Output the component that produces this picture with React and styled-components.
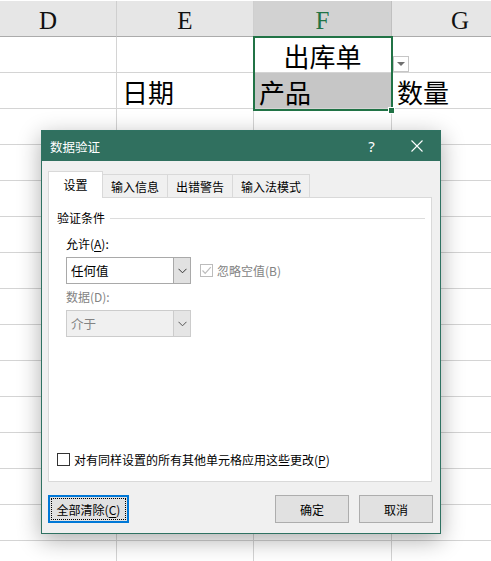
import React from "react";
import styled, { createGlobalStyle } from "styled-components";

const Global = createGlobalStyle`
  html, body { margin: 0; padding: 0; background: #fff; overflow: hidden; }
  body { width: 491px; height: 561px; font-family: "Noto Sans CJK SC", "Noto Sans", sans-serif; }
  * { box-sizing: border-box; }
`;

const Page = styled.div`
  position: relative;
  width: 491px;
  height: 561px;
  overflow: hidden;
`;

const Sheet = styled.div`
  position: relative;
  margin-left: -20px;
  margin-top: 1px;
  display: grid;
  grid-template-columns: 137px 137px 138px 137px;
  grid-auto-rows: 36px;
`;

const HeaderCell = styled.div`
  height: 36px;
  background: ${(p) => (p.$active ? "#d2d2d2" : "#e6e6e6")};
  border-right: 1px solid ${(p) => (p.$active ? "#c0c0c0" : "#cfcfcf")};
  border-bottom: 1px solid #ababab;
  display: flex;
  justify-content: center;
  align-items: flex-end;
  padding-bottom: 3px;
  font-family: "Liberation Serif", "DejaVu Serif", "Times New Roman", serif;
  font-size: 25px;
  line-height: 1;
  color: ${(p) => (p.$active ? "#217346" : "#111")};
`;

const Cell = styled.div`
  height: 36px;
  background: ${(p) => (p.$sel ? "#c6c6c6" : "#fff")};
  border-right: 1px solid #d4d4d4;
  border-bottom: 1px solid #d4d4d4;
  display: flex;
  align-items: flex-end;
  justify-content: ${(p) => (p.$center ? "center" : "flex-start")};
  padding: 0 0 1px ${(p) => (p.$center ? "0" : "5px")};
  font-family: "Noto Sans CJK SC", sans-serif;
  font-size: 26px;
  line-height: 1.2;
  color: #000;
`;

const Selection = styled.div`
  position: absolute;
  left: 273px;
  top: 35px;
  width: 140px;
  height: 75px;
  border: 2px solid #217346;
  pointer-events: none;
`;

const FillHandle = styled.div`
  position: absolute;
  left: 408px;
  top: 106px;
  width: 7px;
  height: 7px;
  background: #217346;
  border: 1px solid #fff;
`;

const DropArrow = styled.div`
  position: absolute;
  left: 413px;
  top: 55px;
  width: 16px;
  height: 16px;
  background: #fff;
  border: 1px solid #c6c6c6;
  display: flex;
  align-items: center;
  justify-content: center;
  &::after {
    content: "";
    border-left: 4px solid transparent;
    border-right: 4px solid transparent;
    border-top: 4px solid #707070;
  }
`;

const Dialog = styled.div`
  position: absolute;
  left: 41px;
  top: 130px;
  width: 400px;
  height: 404px;
  border: 1px solid #2f7262;
  background: #f0f0f0;
  box-shadow: 0 6px 22px rgba(0, 0, 0, 0.32);
  display: flex;
  flex-direction: column;
  font-size: 12px;
  color: #000;
`;

const TitleBar = styled.div`
  height: 30px;
  flex: none;
  background: #30705f;
  color: #fff;
  display: flex;
  align-items: center;
  padding-left: 8px;
`;

const Title = styled.div`
  flex: 1;
  font-size: 12.5px;
`;

const TitleButton = styled.div`
  width: ${(p) => p.$w}px;
  height: 30px;
  display: flex;
  align-items: center;
  justify-content: center;
  font-family: "Noto Sans", sans-serif;
  font-size: 15px;
  color: #fff;
`;

const Body = styled.div`
  flex: 1;
  display: flex;
  flex-direction: column;
  padding: 10px 7px 0 6px;
`;

const TabStrip = styled.div`
  display: flex;
  align-items: flex-end;
  height: 27px;
  margin-bottom: -1px;
  position: relative;
  z-index: 1;
`;

const Tab = styled.div`
  width: ${(p) => p.$w}px;
  height: ${(p) => (p.$active ? 27 : 24)}px;
  background: ${(p) => (p.$active ? "#fff" : "#f0f0f0")};
  border: 1px solid #d9d9d9;
  border-bottom: ${(p) => (p.$active ? "none" : "1px solid #d9d9d9")};
  border-left: ${(p) => (p.$first || p.$active ? "1px solid #d9d9d9" : "none")};
  display: flex;
  align-items: center;
  justify-content: center;
  padding-bottom: ${(p) => (p.$active ? 2 : 0)}px;
`;

const Panel = styled.div`
  height: 285px;
  background: #fff;
  border: 1px solid #d9d9d9;
  margin-right: 1px;
  display: flex;
  flex-direction: column;
  padding: 11px 0 13px 8px;
`;

const GroupHeader = styled.div`
  display: flex;
  align-items: center;
  gap: 5px;
  height: 16px;
  margin-right: 6px;
  &::after {
    content: "";
    flex: 1;
    height: 1px;
    background: #dcdcdc;
    margin-top: 2px;
  }
`;

const Field = styled.div`
  margin-left: 9px;
  display: flex;
  flex-direction: column;
`;

const Label = styled.div`
  height: 16px;
  line-height: 16px;
  color: ${(p) => (p.$disabled ? "#838383" : "#000")};
  margin-top: ${(p) => p.$mt}px;
  margin-bottom: 5px;
`;

const Key = styled.span`
  text-decoration: underline;
  text-underline-offset: 2px;
`;

const Row = styled.div`
  display: flex;
  align-items: center;
`;

const Select = styled.div`
  width: 125px;
  height: 27px;
  display: flex;
  border: 1px solid ${(p) => (p.$disabled ? "#cccccc" : "#a9a9a9")};
  background: ${(p) => (p.$disabled ? "#f0f0f0" : "#fff")};
  color: ${(p) => (p.$disabled ? "#838383" : "#000")};
`;

const SelectValue = styled.div`
  flex: 1;
  display: flex;
  align-items: center;
  padding-left: 4px;
  font-size: 12.5px;
`;

const SelectButton = styled.div`
  width: 17px;
  background: ${(p) => (p.$disabled ? "#e5e5e5" : "#e1e1e1")};
  border-left: 1px solid ${(p) => (p.$disabled ? "#cccccc" : "#a9a9a9")};
  display: flex;
  align-items: center;
  justify-content: center;
`;

const CheckRow = styled.label`
  display: flex;
  align-items: center;
  gap: 4px;
  margin-left: ${(p) => p.$ml || 0}px;
  color: ${(p) => (p.$disabled ? "#838383" : "#000")};
`;

const CheckText = styled.span`
  white-space: nowrap;
`;

const Box = styled.div`
  width: 13px;
  height: 13px;
  border: 1px solid ${(p) => (p.$disabled ? "#bcbcbc" : "#333")};
  background: #fff;
  display: flex;
  align-items: center;
  justify-content: center;
`;

const Spacer = styled.div`
  flex: 1;
`;

const Footer = styled.div`
  display: flex;
  align-items: center;
  gap: 10px;
  margin-top: 13px;
`;

const Button = styled.div`
  position: relative;
  width: ${(p) => p.$w}px;
  height: 28px;
  background: #e1e1e1;
  border: ${(p) => (p.$focus ? "2px solid #0078d7" : "1px solid #adadad")};
  display: flex;
  align-items: center;
  justify-content: center;
  font-size: 12px;
  &::after {
    content: ${(p) => (p.$focus ? '""' : "none")};
    position: absolute;
    inset: 1px;
    border: 1px dotted #000;
  }
`;

const ButtonText = styled.span`
  white-space: nowrap;
`;

const Chevron = ({ color = "#333" }) => (
  <svg width="9" height="6" viewBox="0 0 9 6">
    <path d="M0.5 0.8 L4.5 4.8 L8.5 0.8" fill="none" stroke={color} strokeWidth="1" />
  </svg>
);

const Tick = () => (
  <svg width="11" height="11" viewBox="0 0 11 11">
    <path d="M1.5 5.5 L4.2 8.3 L9.8 2.2" fill="none" stroke="#bcbcbc" strokeWidth="1.2" />
  </svg>
);

const CloseIcon = () => (
  <svg width="12" height="12" viewBox="0 0 12 12">
    <path d="M0.5 0.5 L11.5 11.5 M11.5 0.5 L0.5 11.5" stroke="#fff" strokeWidth="1.1" />
  </svg>
);

const columns = ["D", "E", "F", "G"];
const rows = [
  ["", "", { t: "出库单", center: true }, ""],
  ["", { t: "日期" }, { t: "产品", sel: true }, { t: "数量" }],
];
for (let i = 0; i < 13; i++) rows.push(["", "", "", ""]);

export default function App() {
  return (
    <Page>
      <Global />
      <Sheet>
        {columns.map((c) => (
          <HeaderCell key={c} $active={c === "F"}>{c}</HeaderCell>
        ))}
        {rows.map((r, ri) =>
          r.map((c, ci) => (
            <Cell key={`${ri}-${ci}`} $center={c && c.center} $sel={c && c.sel}>
              {c ? c.t : ""}
            </Cell>
          ))
        )}
        <Selection />
        <FillHandle />
        <DropArrow />
      </Sheet>

      <Dialog>
        <TitleBar>
          <Title>数据验证</Title>
          <TitleButton $w={45}>?</TitleButton>
          <TitleButton $w={46}><CloseIcon /></TitleButton>
        </TitleBar>
        <Body>
          <TabStrip>
            <Tab $w={55} $active $first>设置</Tab>
            <Tab $w={65}>输入信息</Tab>
            <Tab $w={65}>出错警告</Tab>
            <Tab $w={77}>输入法模式</Tab>
          </TabStrip>
          <Panel>
            <GroupHeader>验证条件</GroupHeader>
            <Field>
              <Label $mt={11}>允许(<Key>A</Key>):</Label>
              <Row>
                <Select>
                  <SelectValue>任何值</SelectValue>
                  <SelectButton><Chevron /></SelectButton>
                </Select>
                <CheckRow $ml={9} $disabled>
                  <Box $disabled><Tick /></Box>
                  <CheckText>忽略空值(B)</CheckText>
                </CheckRow>
              </Row>
              <Label $mt={5} $disabled>数据(D):</Label>
              <Select $disabled>
                <SelectValue>介于</SelectValue>
                <SelectButton $disabled><Chevron color="#555" /></SelectButton>
              </Select>
            </Field>
            <Spacer />
            <CheckRow>
              <Box />
              <CheckText>对有同样设置的所有其他单元格应用这些更改(<Key>P</Key>)</CheckText>
            </CheckRow>
          </Panel>
          <Footer>
            <Button $w={81} $focus><ButtonText>全部清除(<Key>C</Key>)</ButtonText></Button>
            <Spacer />
            <Button $w={74}>确定</Button>
            <Button $w={74}>取消</Button>
          </Footer>
        </Body>
      </Dialog>
    </Page>
  );
}
